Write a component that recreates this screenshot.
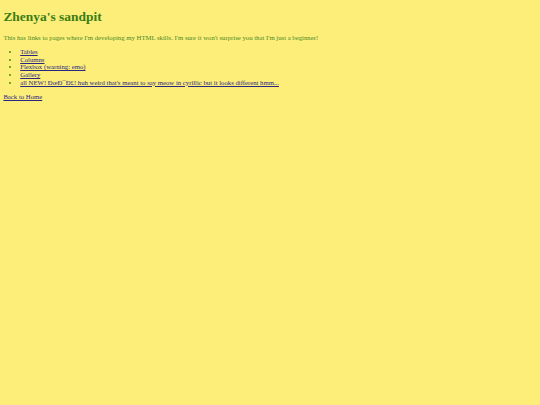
const links = [
  'Tables',
  'Columns',
  'Flexbox (warning: emo)',
  'Gallery',
  "all NEW! ÐœÐ¯Ð£! huh weird that's meant to say meow in cyrillic but it looks different hmm...",
];

const App = () => {
  return (
    <div className="min-h-screen bg-[#fdee7a] px-[3.4px] py-[0.1px] font-['Liberation_Serif',serif] text-[6.72px] leading-[1.15] text-[#4a8a22]">
      <h1 className="my-[9px] text-[13.44px] font-bold text-[#3a7d14]">Zhenya's sandpit</h1>
      <p className="my-[6.72px]">
        This has links to pages where I'm developing my HTML skills. I'm sure it won't surprise you that I'm
        just a beginner!
      </p>
      <ul className="my-[6.72px] list-disc pl-[16.8px]">
        {links.map((link) => (
          <li key={link}>
            <a href="#" className="text-[#2a2682] underline">
              {link}
            </a>
          </li>
        ))}
      </ul>
      <p className="my-[6.72px]">
        <a href="#" className="text-[#2a2682] underline">
          Back to Home
        </a>
      </p>
    </div>
  );
};

export default App;
